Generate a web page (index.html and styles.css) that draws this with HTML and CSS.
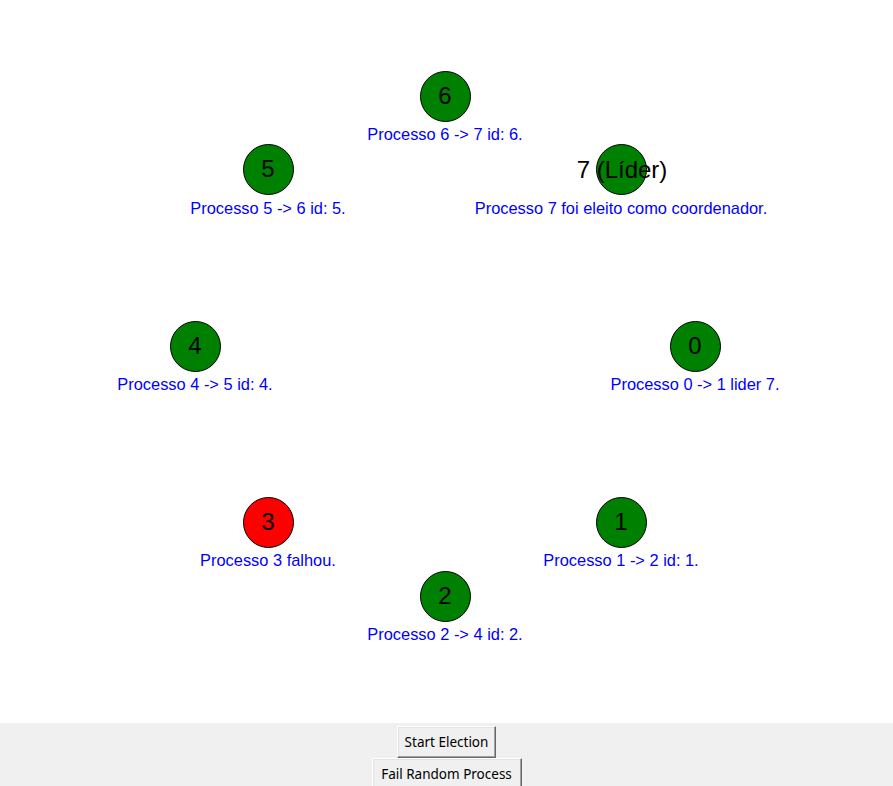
FILE: index.html
```html
<!DOCTYPE html>
<html>
<head>
<meta charset="utf-8">
<link rel="stylesheet" href="styles.css">
</head>
<body>
<div class="app">
  <div class="canvas">
    <div class="circle green" style="left:670px;top:321px"></div>
    <div class="num" style="left:695px;top:346px">0</div>
    <div class="label" style="left:695px;top:384px">Processo 0 -&gt; 1 lider 7.</div>

    <div class="circle green" style="left:596px;top:497px"></div>
    <div class="num" style="left:621px;top:522px">1</div>
    <div class="label" style="left:621px;top:560px">Processo 1 -&gt; 2 id: 1.</div>

    <div class="circle green" style="left:420px;top:571px"></div>
    <div class="num" style="left:445px;top:596px">2</div>
    <div class="label" style="left:445px;top:634px">Processo 2 -&gt; 4 id: 2.</div>

    <div class="circle red" style="left:243px;top:497px"></div>
    <div class="num" style="left:268px;top:522px">3</div>
    <div class="label" style="left:268px;top:560px">Processo 3 falhou.</div>

    <div class="circle green" style="left:170px;top:321px"></div>
    <div class="num" style="left:195px;top:346px">4</div>
    <div class="label" style="left:195px;top:384px">Processo 4 -&gt; 5 id: 4.</div>

    <div class="circle green" style="left:243px;top:144px"></div>
    <div class="num" style="left:268px;top:169px">5</div>
    <div class="label" style="left:268px;top:208px">Processo 5 -&gt; 6 id: 5.</div>

    <div class="circle green" style="left:420px;top:71px"></div>
    <div class="num" style="left:445px;top:96px">6</div>
    <div class="label" style="left:445px;top:134px">Processo 6 -&gt; 7 id: 6.</div>

    <div class="circle green" style="left:596px;top:144px"></div>
    <div class="num" style="left:622px;top:170px">7 (Líder)</div>
    <div class="label" style="left:621px;top:208px">Processo 7 foi eleito como coordenador.</div>
  </div>
  <div class="controls">
    <button class="btn btn-start">Start Election</button>
    <button class="btn btn-fail">Fail Random Process</button>
  </div>
</div>
</body>
</html>
```
FILE: styles.css
```css
html, body {
  margin: 0;
  padding: 0;
  background: #f0f0f0;
}
.app {
  width: 893px;
  height: 786px;
  display: flex;
  flex-direction: column;
  overflow: hidden;
}
.canvas {
  position: relative;
  height: 723px;
  background: #ffffff;
  flex: none;
}
.circle {
  position: absolute;
  width: 49px;
  height: 49px;
  border: 1px solid #000;
  border-radius: 50%;
  box-sizing: content-box;
  margin: -0.5px 0 0 -0.5px;
}
.green { background: #008000; }
.red { background: #ff0000; }
.num {
  position: absolute;
  width: 300px;
  margin-left: -150px;
  height: 30px;
  margin-top: -15px;
  line-height: 30px;
  text-align: center;
  font-family: "Liberation Sans", Arial, sans-serif;
  font-size: 24px;
  color: #000;
  white-space: nowrap;
}
.label {
  position: absolute;
  width: 400px;
  margin-left: -200px;
  height: 20px;
  margin-top: -10px;
  line-height: 20px;
  text-align: center;
  font-family: "Liberation Sans", Arial, sans-serif;
  font-size: 16.4px;
  color: #0000ff;
  white-space: nowrap;
}
.controls {
  display: flex;
  flex-direction: column;
  align-items: center;
  padding-top: 3px;
}
.btn {
  font-family: "Noto Sans", "Open Sans", sans-serif;
  font-size: 13.5px;
  white-space: nowrap;
  color: #000;
  background: #f0f0f0;
  height: 32px;
  margin: 0;
  padding: 0;
  border: 1px solid;
  border-color: #ffffff #696969 #696969 #ffffff;
  box-shadow: inset -1px -1px 0 #a0a0a0, inset 1px 1px 0 #e3e3e3;
  border-radius: 0;
}
.btn-start { width: 99px; }
.btn-fail { width: 150px; }
```
